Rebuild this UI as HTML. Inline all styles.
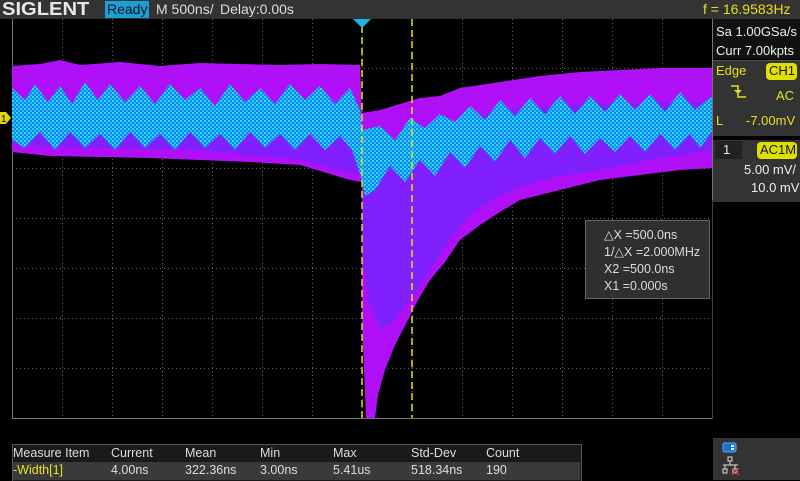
<!DOCTYPE html>
<html><head><meta charset="utf-8"><style>
body{margin:0;width:800px;height:480px;background:#000;overflow:hidden;font-family:"Liberation Sans",sans-serif;position:relative}
.t{position:absolute;white-space:nowrap}
</style></head><body>
<div style="position:absolute;left:0;top:0;width:800px;height:19px;background:#333"></div>
<div class="t" style="left:2px;top:-1px;font-size:18px;font-weight:bold;color:#e8e8e8;letter-spacing:0px;transform:scaleX(1.12);transform-origin:left">SIGLENT</div>
<div style="position:absolute;left:105px;top:1px;width:44px;height:17px;background:#18a0d8"></div>
<div class="t" style="left:107px;top:1px;font-size:14px;color:#111">Ready</div>
<div class="t" style="left:156px;top:1px;font-size:14px;color:#ddd">M 500ns/</div>
<div class="t" style="left:220px;top:1px;font-size:14px;color:#ddd">Delay:0.00s</div>
<div class="t" style="left:703px;top:1px;font-size:14px;color:#e8e020">f = 16.9583Hz</div>

<svg style="position:absolute;left:0;top:0" width="800" height="480">
<defs>
<pattern id="cp" width="4" height="4" patternUnits="userSpaceOnUse">
<rect width="4" height="4" fill="#1c7cf8"/><rect width="2" height="2" fill="#20e4ec"/><rect x="2" y="2" width="2" height="2" fill="#18c8f0"/>
</pattern>
</defs>
<g stroke="#666" stroke-width="1" stroke-dasharray="1,3">
<line x1="62.5" y1="19" x2="62.5" y2="418"/><line x1="112.5" y1="19" x2="112.5" y2="418"/><line x1="162.5" y1="19" x2="162.5" y2="418"/><line x1="212.5" y1="19" x2="212.5" y2="418"/><line x1="262.5" y1="19" x2="262.5" y2="418"/><line x1="312.5" y1="19" x2="312.5" y2="418"/><line x1="362.5" y1="19" x2="362.5" y2="418"/><line x1="412.5" y1="19" x2="412.5" y2="418"/><line x1="462.5" y1="19" x2="462.5" y2="418"/><line x1="512.5" y1="19" x2="512.5" y2="418"/><line x1="562.5" y1="19" x2="562.5" y2="418"/><line x1="612.5" y1="19" x2="612.5" y2="418"/><line x1="662.5" y1="19" x2="662.5" y2="418"/>
<line x1="12" y1="68.5" x2="712" y2="68.5"/><line x1="12" y1="118.5" x2="712" y2="118.5"/><line x1="12" y1="168.5" x2="712" y2="168.5"/><line x1="12" y1="218.5" x2="712" y2="218.5"/><line x1="12" y1="268.5" x2="712" y2="268.5"/><line x1="12" y1="318.5" x2="712" y2="318.5"/><line x1="12" y1="368.5" x2="712" y2="368.5"/>
</g>
<polyline points="12.5,19 12.5,418.5 712.5,418.5 712.5,19" fill="none" stroke="#777"/>
<polygon fill="#b010f8" points="12,66 40,64 60,60 80,65 120,62 160,66 200,63 240,64 280,65 320,64 360,65 362,113 380,110 400,104 420,98 440,96 460,88 500,82 540,76 580,72 620,70 660,68 712,68 712,168 680,170 640,175 600,180 560,190 520,200 500,212 480,225 460,240 445,262 430,280 418,300 408,320 395,345 385,370 378,395 375,418 366,418 362,320 362,182 350,180 300,165 250,162 200,160 150,158 100,157 50,156 12,152"/>
<polygon fill="#8020fc" points="12,105 360,105 362,150 400,140 440,128 480,115 520,108 600,104 712,102 712,150 650,160 600,170 540,180 500,195 470,215 450,240 430,270 410,300 395,320 380,330 368,300 362,250 362,175 300,160 200,150 100,148 12,145"/>
<polygon fill="url(#cp)" points="12,88 25,100 35,84 48,102 60,86 72,104 85,82 98,100 110,84 125,102 140,86 155,104 170,84 185,100 200,88 215,106 230,84 245,102 260,88 275,104 290,84 305,100 320,86 335,104 350,88 360,110 362,130 380,126 395,140 410,118 425,128 440,114 455,122 470,106 485,120 500,100 515,116 530,98 545,114 560,96 575,114 590,96 605,112 620,94 635,110 650,94 665,112 680,92 695,110 712,96 712,132 700,148 690,134 675,150 660,134 645,152 630,136 615,152 600,138 585,154 570,136 555,154 540,138 525,158 510,140 495,162 480,146 465,168 450,152 435,176 420,160 405,182 390,166 375,190 365,196 362,180 352,150 340,136 325,150 310,134 295,150 280,134 265,148 250,132 235,150 220,134 205,148 190,132 175,150 160,134 145,148 130,132 115,150 100,134 85,148 70,132 55,150 40,132 25,148 12,140"/>
<g stroke="#e8e000" stroke-width="1.5" stroke-dasharray="7,4"><line x1="362" y1="26" x2="362" y2="418"/><line x1="412" y1="19" x2="412" y2="418"/></g>
<polygon fill="#20b0e8" points="353,19 371,19 362,28"/>
<polygon fill="#e0d800" points="0,112 6,112 11,118 6,124 0,124"/>
<text x="1" y="122" font-size="10" fill="#000" font-family="Liberation Sans">1</text>
<rect x="585.5" y="220.5" width="124" height="78" fill="#333" fill-opacity="0.92" stroke="#666"/>
</svg>
<div class="t" style="left:604px;top:227px;font-size:12.5px;color:#ddd;line-height:17px">△X =500.0ns<br>1/△X =2.000MHz<br>X2 =500.0ns<br>X1 =0.000s</div>

<div style="position:absolute;left:713px;top:19px;width:87px;height:40px;background:#111"></div>
<div class="t" style="left:716px;top:22px;font-size:13px;color:#eee;line-height:19px">Sa 1.00GSa/s<br>Curr 7.00kpts</div>
<div style="position:absolute;left:713px;top:60px;width:87px;height:75px;background:#333;border-top:1px solid #555"></div>
<div class="t" style="left:716px;top:63px;font-size:13px;color:#e8e020">Edge</div>
<div style="position:absolute;left:766px;top:63px;width:31px;height:17px;background:#e0e000;border-radius:4px"></div>
<div class="t" style="left:769px;top:63px;font-size:13px;color:#111">CH1</div>
<svg style="position:absolute;left:730px;top:84px" width="20" height="16"><polyline points="1,2 8,2 8,13 16,13" fill="none" stroke="#e8e020" stroke-width="1.5"/><polygon points="4,6 12,6 8,10" fill="#e8e020"/></svg>
<div class="t" style="left:776px;top:88px;font-size:13px;color:#e8e020">AC</div>
<div class="t" style="left:716px;top:113px;font-size:13px;color:#e8e020">L</div>
<div class="t" style="left:746px;top:113px;font-size:13px;color:#e8e020">-7.00mV</div>
<div style="position:absolute;left:713px;top:140px;width:87px;height:62px;background:#333"></div>
<div style="position:absolute;left:715px;top:141px;width:27px;height:18px;background:#222"></div>
<div class="t" style="left:723px;top:142px;font-size:13px;color:#eee">1</div>
<div style="position:absolute;left:757px;top:142px;width:40px;height:17px;background:#e0e000;border-radius:4px"></div>
<div class="t" style="left:760px;top:142px;font-size:13px;color:#111">AC1M</div>
<div class="t" style="left:744px;top:162px;font-size:13px;color:#eee">5.00 mV/</div>
<div class="t" style="left:751px;top:180px;font-size:13px;color:#eee">10.0 mV</div>
<div style="position:absolute;left:712px;top:200px;width:1px;height:219px;background:#444"></div>

<div style="position:absolute;left:12px;top:444px;width:568px;height:36px;background:#1a1a1a;border:1px solid #555;border-bottom:none"></div>
<div style="position:absolute;left:13px;top:462px;width:567px;height:18px;background:#3a3a3a"></div>
<div class="t" style="left:13px;top:446px;font-size:12.5px;color:#ddd">Measure Item</div>
<div class="t" style="left:111px;top:446px;font-size:12.5px;color:#ddd">Current</div>
<div class="t" style="left:185px;top:446px;font-size:12.5px;color:#ddd">Mean</div>
<div class="t" style="left:260px;top:446px;font-size:12.5px;color:#ddd">Min</div>
<div class="t" style="left:333px;top:446px;font-size:12.5px;color:#ddd">Max</div>
<div class="t" style="left:411px;top:446px;font-size:12.5px;color:#ddd">Std-Dev</div>
<div class="t" style="left:486px;top:446px;font-size:12.5px;color:#ddd">Count</div>
<div class="t" style="left:13px;top:463px;font-size:12.5px;color:#e8e020">-Width[1]</div>
<div class="t" style="left:111px;top:463px;font-size:12.5px;color:#ddd">4.00ns</div>
<div class="t" style="left:185px;top:463px;font-size:12.5px;color:#ddd">322.36ns</div>
<div class="t" style="left:260px;top:463px;font-size:12.5px;color:#ddd">3.00ns</div>
<div class="t" style="left:333px;top:463px;font-size:12.5px;color:#ddd">5.41us</div>
<div class="t" style="left:411px;top:463px;font-size:12.5px;color:#ddd">518.34ns</div>
<div class="t" style="left:486px;top:463px;font-size:12.5px;color:#ddd">190</div>
<div style="position:absolute;left:713px;top:438px;width:87px;height:42px;background:#333"></div>
<svg style="position:absolute;left:718px;top:440px" width="40" height="40"><rect x="5" y="3" width="13" height="9" rx="2" fill="#1870d8" stroke="#5af" /><rect x="13" y="5" width="3" height="2" fill="#fff"/><rect x="13" y="8" width="3" height="2" fill="#fff"/><g stroke="#ddd" fill="none"><rect x="10" y="17" width="4" height="4"/><line x1="12" y1="21" x2="12" y2="25"/><line x1="5" y1="25" x2="20" y2="25"/><line x1="7" y1="25" x2="7" y2="29"/><line x1="17" y1="25" x2="17" y2="29"/><rect x="5" y="29" width="4" height="4"/><rect x="15" y="29" width="4" height="4"/></g><path d="M14 28 L21 35 M21 28 L14 35" stroke="#e33" stroke-width="1.2"/></svg>
</body></html>
